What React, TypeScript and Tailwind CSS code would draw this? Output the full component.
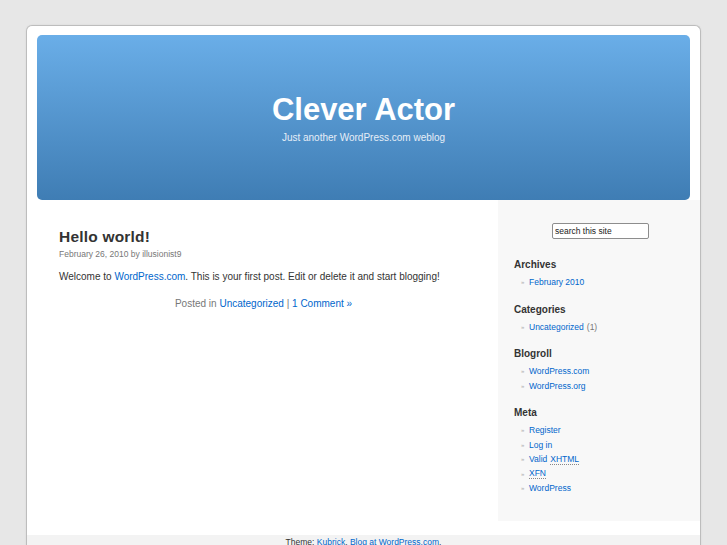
const sections = [
  { title: 'Archives', items: [{ label: 'February 2010' }] },
  { title: 'Categories', items: [{ label: 'Uncategorized', count: '(1)' }] },
  { title: 'Blogroll', items: [{ label: 'WordPress.com' }, { label: 'WordPress.org' }] },
  {
    title: 'Meta',
    items: [
      { label: 'Register' },
      { label: 'Log in' },
      { label: 'Valid', abbr: 'XHTML' },
      { label: '', abbr: 'XFN' },
      { label: 'WordPress' },
    ],
  },
];

function Sidebar() {
  return (
    <aside className="w-[202px] shrink-0 bg-[#f8f8f8] pt-[23px] pb-[12px]">
      {/* search */}
      <div className="pl-[54px]">
        <input
          type="text"
          defaultValue="search this site"
          className="block h-[16px] w-[97px] rounded-[2px] border border-[#8d8d8d] bg-white px-[2px] text-[8.5px] text-[#222] outline-none"
        />
      </div>

      <div className="mt-[19px] pl-[16px]">
        {sections.map((s) => (
          <div key={s.title} className="mb-[13px]">
            <h2 className="text-[10px] font-bold leading-[14px] text-[#333]">{s.title}</h2>
            <ul className="mt-[3px]">
              {s.items.map((item, i) => (
                <li key={i} className="flex items-center pl-[7px] text-[8.5px] leading-[14.5px]">
                  <span className="w-[8px] text-[6px] text-[#aaa]">»</span>
                  {item.label && <a className="text-[#06c]">{item.label}</a>}
                  {item.abbr && (
                    <abbr
                      className={`${item.label ? 'ml-[3px]' : ''} border-b border-dotted border-[#888] leading-[10px] text-[#06c] no-underline`}
                    >
                      {item.abbr}
                    </abbr>
                  )}
                  {item.count && <span className="ml-[3px] text-[#777]">{item.count}</span>}
                </li>
              ))}
            </ul>
          </div>
        ))}
      </div>
    </aside>
  );
}

export default function App() {
  return (
    <div className="min-h-screen bg-[#e7e7e7] pt-[25px] font-['Liberation_Sans',Arial,sans-serif]">
      <div className="ml-[26px] w-[675px] overflow-hidden rounded-t-[6px] border border-b-0 border-[#bdbdbd] bg-white shadow-[0_0_2px_rgba(0,0,0,0.08)]">
        {/* Header */}
        <div className="px-[10px] pt-[9px]">
          <div className="flex h-[165px] flex-col items-center rounded-[5px] bg-gradient-to-b from-[#6aaee8] to-[#3f7db4] pt-[57px]">
            <h1 className="text-[31px] font-bold leading-[36px] text-white">Clever Actor</h1>
            <p className="mt-[3px] text-[10px] leading-[14px] text-[#e6eef7]">Just another WordPress.com weblog</p>
          </div>
        </div>

        {/* Body */}
        <div className="flex">
          <main className="flex-1 pl-[32px] pr-[30px] pt-[27px]">
            <h2 className="text-[15.5px] font-bold leading-[20px] tracking-[0.2px] text-[#333]">Hello world!</h2>
            <small className="mt-[1px] block text-[8.5px] leading-[12px] text-[#777]">
              February 26, 2010 by illusionist9
            </small>
            <p className="mt-[10px] text-[10px] leading-[14px] text-[#333]">
              Welcome to <a className="text-[#06c]">WordPress.com</a>. This is your first post. Edit or delete it and
              start blogging!
            </p>
            <p className="mt-[13px] text-center text-[10px] leading-[14px] text-[#777]">
              Posted in <a className="text-[#06c]">Uncategorized</a> | <a className="text-[#06c]">1 Comment »</a>
            </p>
          </main>
          <Sidebar />
        </div>

        <div className="h-[14px] bg-white" />

        {/* Footer */}
        <footer className="bg-[#f3f3f3] pt-[1px] pb-[10px] text-center text-[8.5px] leading-[12px] text-[#333]">
          Theme: <a className="text-[#06c]">Kubrick</a>. <a className="text-[#06c]">Blog at WordPress.com</a>.
        </footer>
      </div>
    </div>
  );
}
